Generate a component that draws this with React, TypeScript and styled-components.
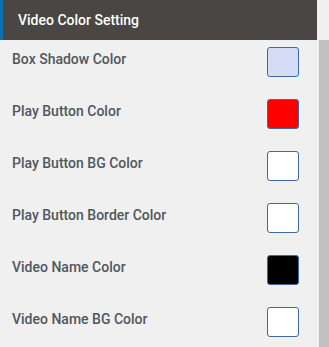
import React from 'react';
import styled, { createGlobalStyle } from 'styled-components';

const GlobalStyle = createGlobalStyle`
  html, body {
    margin: 0;
    padding: 0;
    background: #f0f0f0;
    font-family: Roboto, "Liberation Sans", sans-serif;
  }
`;

const Layout = styled.div`
  display: flex;
  width: 329px;
  height: 347px;
  overflow: hidden;
`;

const Panel = styled.div`
  width: 317px;
  flex-shrink: 0;
`;

const ScrollTrack = styled.div`
  margin-left: 2px;
  margin-top: 40px;
  width: 10px;
  background: #c1c1c1;
`;

const Header = styled.div`
  height: 40px;
  box-sizing: border-box;
  background: #4a4643;
  border-left: 3px solid #0a72b0;
  display: flex;
  align-items: center;
  padding-left: 15px;
  color: #ffffff;
  font-size: 14px;
  font-weight: 500;
`;

const Row = styled.div`
  height: 52px;
  box-sizing: border-box;
  display: flex;
  justify-content: space-between;
  align-items: flex-start;
  padding: 7px 18px 0 12px;
`;

const Label = styled.span`
  margin-top: 2px;
  line-height: 20px;
  font-size: 14px;
  font-weight: 500;
  color: #50575e;
`;

const Swatch = styled.div<{ $color: string }>`
  width: 32px;
  height: 30px;
  box-sizing: border-box;
  border: 1px solid #3f67a0;
  border-radius: 3px;
  background: ${(p) => p.$color};
`;

const settings = [
  { label: 'Box Shadow Color', color: '#d3dcf4' },
  { label: 'Play Button Color', color: '#ff0000' },
  { label: 'Play Button BG Color', color: '#ffffff' },
  { label: 'Play Button Border Color', color: '#ffffff' },
  { label: 'Video Name Color', color: '#000000' },
  { label: 'Video Name BG Color', color: '#ffffff' },
];

export default function App() {
  return (
    <Layout>
      <GlobalStyle />
      <Panel>
        <Header>Video Color Setting</Header>
        {settings.map((s) => (
          <Row key={s.label}>
            <Label>{s.label}</Label>
            <Swatch $color={s.color} />
          </Row>
        ))}
      </Panel>
      <ScrollTrack />
    </Layout>
  );
}
